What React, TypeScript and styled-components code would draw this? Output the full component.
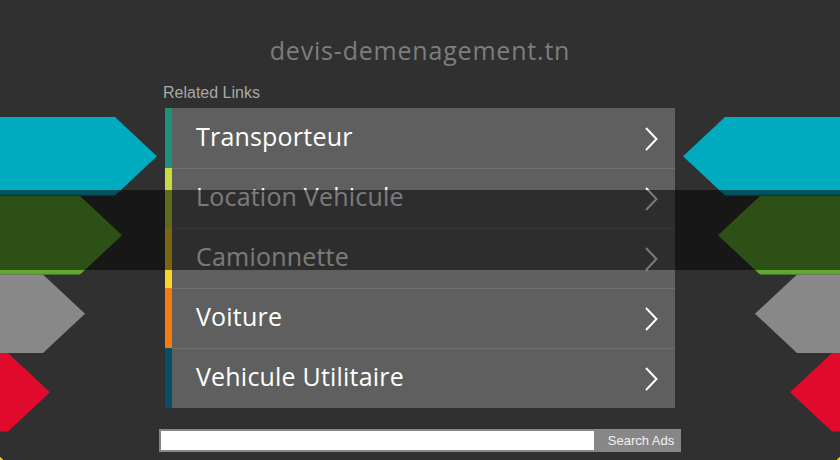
import styled, { createGlobalStyle } from "styled-components";

const links = [
  { label: "Transporteur", color: "#1d917a" },
  { label: "Location Vehicule", color: "#c8dc3c" },
  { label: "Camionnette", color: "#fbd628" },
  { label: "Voiture", color: "#f47c0c" },
  { label: "Vehicule Utilitaire", color: "#0b4d66" },
];

// left-hand arrows: top edge, x of the flat corner, fill
const arrows = [
  { top: 117, corner: 115, fill: "#00abc0" },
  { top: 196, corner: 80, fill: "#5ea82e" },
  { top: 274.5, corner: 43, fill: "#888888" },
  { top: 353, corner: 8, fill: "#df0a2c" },
  { top: 431.5, corner: -27, fill: "#f6c81c" },
];

const H = 78.5;
const TIP = 42;

function leftPoints(top: number, c: number) {
  return `-10,${top} ${c},${top} ${c + TIP},${top + H / 2} ${c},${top + H} -10,${top + H}`;
}

function rightPoints(top: number, c: number) {
  const r = 840 - c;
  return `850,${top} ${r},${top} ${r - TIP},${top + H / 2} ${r},${top + H} 850,${top + H}`;
}

function App() {
  return (
    <>
      <GlobalStyle />
      <Page>
        <Column>
          <Title>devis-demenagement.tn</Title>
          <Related>Related Links</Related>
          <List>
            {links.map((l, i) => (
              <Row key={l.label}>
                <Bar $color={l.color} />
                <RowBody $first={i === 0}>
                  <Label>{l.label}</Label>
                  <svg width="14" height="26" viewBox="0 0 14 26">
                    <polyline
                      points="2,2 12.5,13 2,24"
                      fill="none"
                      stroke="#ffffff"
                      strokeWidth="2"
                    />
                  </svg>
                </RowBody>
              </Row>
            ))}
          </List>
          <Search>
            <SearchInput />
            <SearchButton>Search Ads</SearchButton>
          </Search>
        </Column>
        <Decor width="840" height="460" viewBox="0 0 840 460">
          {arrows.map((a) => (
            <g key={a.top}>
              <polygon points={leftPoints(a.top, a.corner)} fill={a.fill} />
              <polygon points={rightPoints(a.top, a.corner)} fill={a.fill} />
            </g>
          ))}
          <rect x="0" y="190" width="840" height="80" fill="rgba(0,0,0,0.52)" />
        </Decor>
      </Page>
    </>
  );
}

const GlobalStyle = createGlobalStyle`
  html, body {
    margin: 0;
    padding: 0;
    background: #303030;
  }
`;

const Page = styled.div`
  position: relative;
  width: 840px;
  height: 460px;
  overflow: hidden;
  background: #303030;
`;

const Column = styled.div`
  width: 522px;
  margin: 0 auto;
  padding-top: 33px;
  display: flex;
  flex-direction: column;
`;

const Title = styled.div`
  text-align: center;
  font-family: "Open Sans", sans-serif;
  font-size: 25px;
  line-height: 34px;
  letter-spacing: 0.8px;
  color: #7d7d7d;
`;

const Related = styled.div`
  margin-top: 17px;
  padding-left: 4px;
  font-family: "Liberation Sans", Arial, sans-serif;
  font-size: 16px;
  line-height: 18px;
  color: #a8a8a8;
`;

const List = styled.div`
  margin: 6px 6px 0;
  display: flex;
  flex-direction: column;
`;

const Row = styled.div`
  display: flex;
  height: 60px;
  background: #5f5f5f;
`;

const Bar = styled.div<{ $color: string }>`
  width: 7px;
  flex-shrink: 0;
  background: ${(p) => p.$color};
`;

const RowBody = styled.div<{ $first: boolean }>`
  flex: 1;
  display: flex;
  align-items: center;
  justify-content: space-between;
  padding: 0 17px 0 24px;
  border-top: 1px solid ${(p) => (p.$first ? "transparent" : "#707070")};
`;

const Label = styled.span`
  font-family: "Open Sans", sans-serif;
  font-size: 25px;
  color: #ffffff;
  letter-spacing: 0.2px;
  padding-bottom: 5px;
`;

const Search = styled.div`
  margin-top: 21px;
  display: flex;
  height: 23px;
  background: #878787;
  padding: 2px 0 2px 2px;
  box-sizing: border-box;
`;

const SearchInput = styled.div`
  flex: 1;
  background: #ffffff;
`;

const SearchButton = styled.div`
  width: 87px;
  box-sizing: border-box;
  padding-left: 7px;
  display: flex;
  align-items: center;
  justify-content: center;
  font-family: "Liberation Sans", Arial, sans-serif;
  font-size: 13px;
  color: #f2f2f2;
`;

const Decor = styled.svg`
  position: absolute;
  top: 0;
  left: 0;
  pointer-events: none;
`;

export default App;
